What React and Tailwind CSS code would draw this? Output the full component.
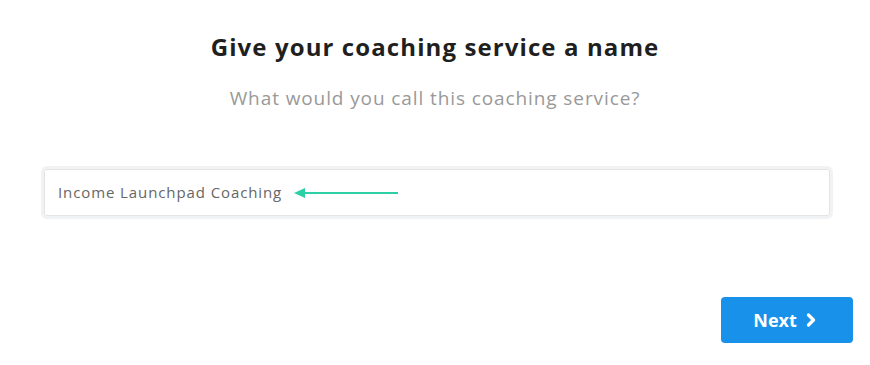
import { ChevronRight } from "lucide-react";

export default function App() {
  return (
    <div className="w-[870px] h-[365px] bg-white font-['Open_Sans',sans-serif]">
      <div className="flex flex-col items-center pt-[31px]">
        <h1 className="text-[24px] leading-[32px] font-bold tracking-[1.1px] text-[#1f1f1f]">
          Give your coaching service a name
        </h1>
        <p className="mt-[22px] text-[19px] leading-[26px] tracking-[0.9px] text-[#999]">
          What would you call this coaching service?
        </p>
      </div>

      <div className="mt-[55px] pl-[41px] pr-[37px]">
        <div className="flex items-center h-[53px] rounded-[6px] border-[3px] border-[#f1f2f3]">
          <div className="flex items-center flex-1 h-full bg-white rounded-[3px] border border-[#e2e4e6] px-[13px]">
            <span className="text-[15px] tracking-[0.9px] text-[#666]">Income Launchpad Coaching</span>
            <svg width="106" height="12" viewBox="0 0 106 12" className="ml-[12px]">
              <path d="M10 6 H104" stroke="#2ccfa6" strokeWidth="2" />
              <path d="M0 6 L11 1 L11 11 Z" fill="#2ccfa6" />
            </svg>
          </div>
        </div>
      </div>

      <div className="flex justify-end pr-[17px] mt-[78px]">
        <button className="flex items-center justify-center gap-[4px] w-[132px] h-[46px] rounded-[4px] bg-[#1791ea] text-white text-[18px] font-bold">
          Next
          <ChevronRight size={20} strokeWidth={4} />
        </button>
      </div>
    </div>
  );
}
